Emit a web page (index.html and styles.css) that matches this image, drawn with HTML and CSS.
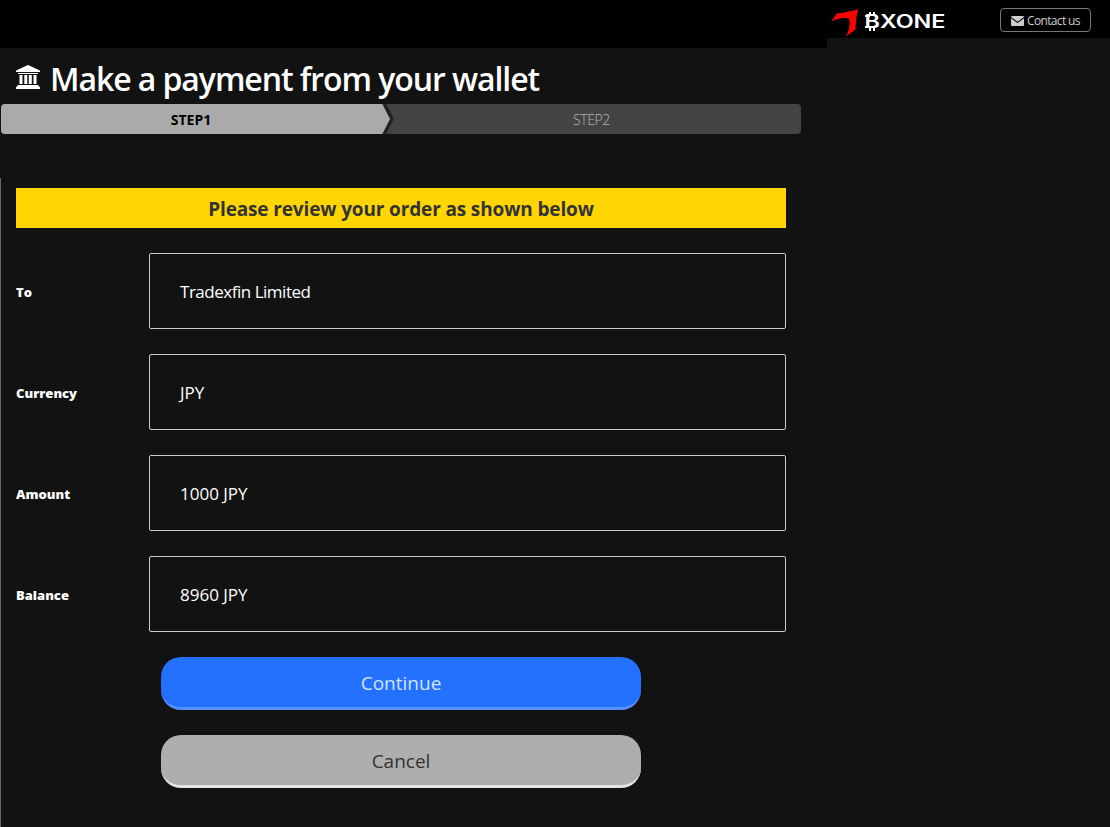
FILE: index.html
```html
<!DOCTYPE html>
<html lang="en">
  <head>
    <meta charset="UTF-8" />
    <meta name="viewport" content="width=device-width, initial-scale=1.0" />
    <title>BXONE - Payment</title>
    <link rel="stylesheet" href="styles.css">
  </head>
  <body>
    <header class="header">
      <div class="header-left"></div>
      <div class="header-right">
        <svg class="logo" width="116" height="28" viewBox="0 0 116 28">
          <path fill="#f00" d="M-1 17.500 L5 9.500 Q14 8.500 26 5.200 Q23.500 15 23.500 25.500 L14 32.500 Q19 23 17 14.200 Q7 13 -1 17.500Z" />
          <text class="logo-text" x="32.500" y="24" textLength="81" lengthAdjust="spacingAndGlyphs">BXONE</text>
          <path fill="#fff" d="M37 8h2v4h-2zM41 8h2v4h-2zM37 23h2v4h-2zM41 23h2v4h-2zM33 11h5v2h-5zM33 22h5v2h-5z" />
        </svg>
        <a class="contact" href="#">
          <svg width="13" height="10" viewBox="0 0 13 10">
            <path fill="#ccc" d="M1 0h11q1 0 1 1L6.500 5.800 0 1Q0 0 1 0zM0 2.200 6.500 7 13 2.200V9q0 1-1 1H1Q0 10 0 9z" />
          </svg>
          <span>Contact us</span>
        </a>
      </div>
    </header>

    <main class="container">
      <h1 class="title">
        <svg width="24" height="26" viewBox="0 0 24 26">
          <path fill="#fff" d="M12 0 24 5.500V7H0V5.500zM2 8h20v1H2zM3.500 10h3v9h-3zM8.300 10h3v9h-3zM12.800 10h3v9h-3zM17.500 10h3v9h-3zM2 20h20l2 2.500V24H0V22.500z" />
        </svg>
        <span>Make a payment from your wallet</span>
      </h1>
      <div class="steps">
        <div class="step active">STEP1</div>
        <div class="step">STEP2</div>
      </div>

      <div class="content">
        <p class="notice"><span>Please review your order as shown below</span></p>
        <div class="row">
          <label>To</label>
          <div class="value name">Tradexfin Limited</div>
        </div>
        <div class="row">
          <label>Currency</label>
          <div class="value">JPY</div>
        </div>
        <div class="row">
          <label>Amount</label>
          <div class="value">1000 JPY</div>
        </div>
        <div class="row">
          <label>Balance</label>
          <div class="value">8960 JPY</div>
        </div>
        <div class="buttons">
          <button class="btn btn-continue">Continue</button>
          <button class="btn btn-cancel">Cancel</button>
        </div>
      </div>
    </main>
  </body>
</html>
```
FILE: styles.css
```css
* {
  box-sizing: border-box;
}
body {
  margin: 0;
  height: 827px;
  overflow: hidden;
  background: linear-gradient(#666, #666) 0 178px / 1px 100% no-repeat #121212;
  color: #fff;
  font-family: "Open Sans", "Noto Sans", sans-serif;
}
.header {
  display: flex;
  align-items: flex-start;
  height: 48px;
}
.header-left {
  width: 827px;
  height: 48px;
  background: #000;
}
.header-right {
  flex: 1;
  display: flex;
  justify-content: space-between;
  height: 38px;
  padding: 4px 19px 0 5px;
  background: #000;
}
.logo {
  overflow: visible;
}
.logo-text {
  fill: #fff;
  font: 600 18px Inter, sans-serif;
}
.contact {
  display: flex;
  align-items: center;
  gap: 3px;
  width: 91px;
  height: 24px;
  margin-top: 4px;
  padding: 1px 0 0 10px;
  border: 1px solid #777;
  border-radius: 4px;
  color: #ccc;
  font-size: 12px;
  letter-spacing: -0.65px;
  text-decoration: none;
  white-space: nowrap;
}
.container {
  width: 801px;
}
.title {
  display: flex;
  align-items: center;
  gap: 10px;
  height: 56px;
  margin: 0;
  padding: 4px 0 0 16px;
  font-size: 32px;
  font-weight: 600;
  letter-spacing: -1.07px;
  white-space: nowrap;
}
.steps {
  display: flex;
  height: 30px;
  margin-left: 1px;
  border-radius: 4px;
  background: #444;
  overflow: hidden;
}
.step {
  width: 379px;
  margin-left: 21px;
  color: #b4b4b4;
  font-size: 14px;
  font-weight: 300;
  line-height: 32px;
  letter-spacing: -0.4px;
  text-align: center;
}
.step.active {
  position: relative;
  width: 380px;
  margin-left: 0;
  background: #aaa;
  color: #000;
  font-weight: 700;
  letter-spacing: 0;
}
.step.active::before,
.step.active::after {
  content: "";
  position: absolute;
  top: 0;
  left: 100%;
  width: 13px;
  height: 30px;
  background: #222;
  clip-path: polygon(0 0, 40% 0, 100% 50%, 40% 100%, 0 100%);
}
.step.active::after {
  width: 9px;
  background: #aaa;
  clip-path: polygon(0 0, 15% 0, 100% 50%, 15% 100%, 0 100%);
}
.content {
  padding: 54px 15px 0 16px;
}
.notice {
  height: 40px;
  margin: 0 0 25px;
  background: #ffd504;
  color: #333;
  font-size: 19px;
  font-weight: 700;
  line-height: 43px;
  letter-spacing: -0.14px;
  text-align: center;
}
.row {
  display: flex;
  align-items: center;
  margin-bottom: 25px;
}
.row label {
  width: 133px;
  padding-top: 2px;
  font-size: 13px;
  font-weight: 800;
}
.value {
  flex: 1;
  height: 76px;
  padding-left: 30px;
  border: 1px solid #ccc;
  border-radius: 2px;
  font-size: 17px;
  line-height: 75px;
}
.value.name {
  letter-spacing: -0.48px;
}
.buttons {
  display: flex;
  flex-direction: column;
  align-items: center;
  gap: 25px;
}
.btn {
  width: 480px;
  height: 53px;
  padding: 2px 0 0;
  border: 0;
  border-bottom: 3px solid #5990ff;
  border-radius: 20px;
  background: #2471ff;
  color: #d3e3ff;
  font-family: inherit;
  font-size: 19px;
}
.btn-cancel {
  border-color: #e3e3e3;
  background: #aeaeae;
  color: #333;
}
```
